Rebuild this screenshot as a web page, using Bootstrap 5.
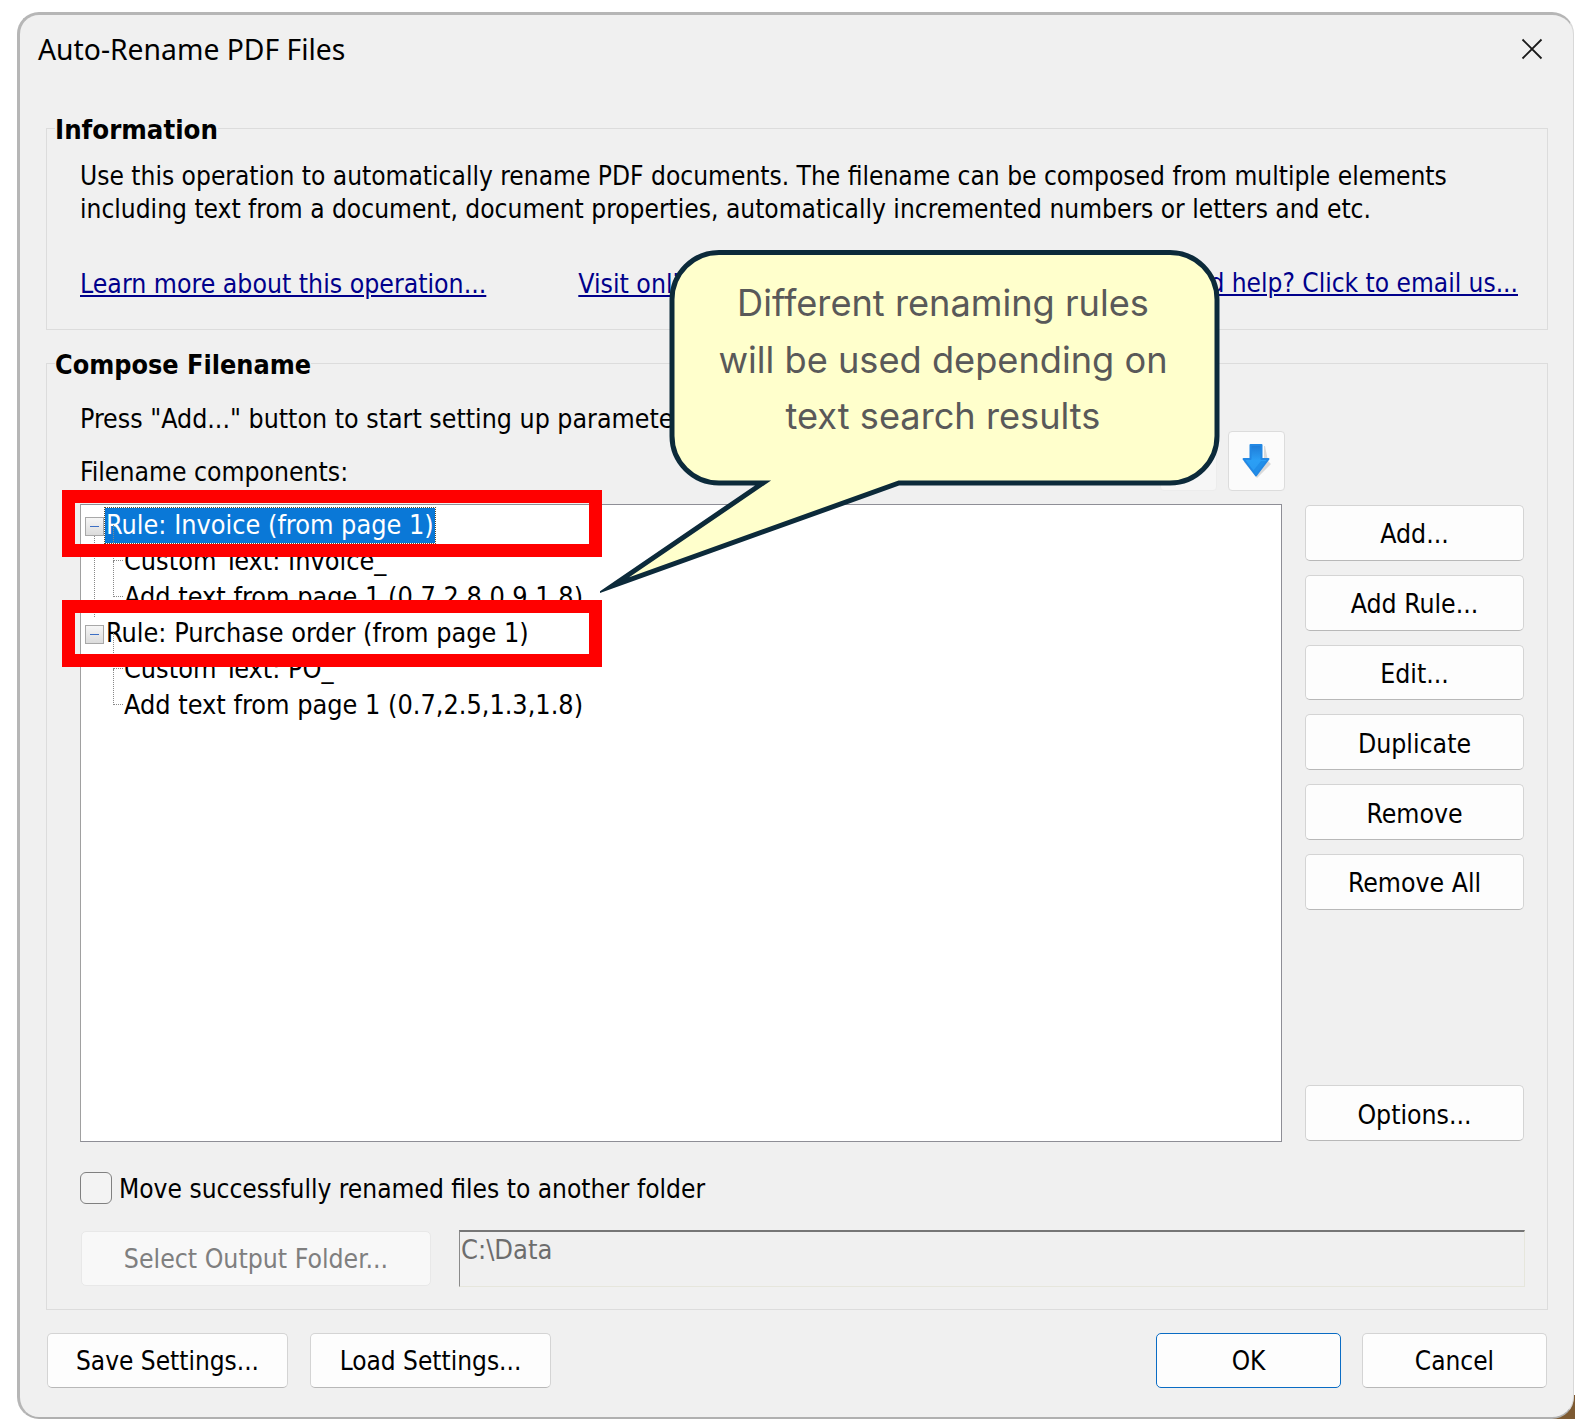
<!DOCTYPE html>
<html lang="en">
<head>
<meta charset="utf-8">
<title>Auto-Rename PDF Files</title>
<link href="https://cdn.jsdelivr.net/npm/bootstrap@5.3.0/dist/css/bootstrap.min.css" rel="stylesheet">
<style>
html,body{margin:0;padding:0;width:1575px;height:1419px;overflow:hidden;background:#fff}
body{position:relative;font-family:"DejaVu Sans","Noto Sans",sans-serif;font-stretch:condensed;font-size:26.1px;line-height:33px;color:#000}
.corner-bg{position:absolute;right:0;bottom:0;width:24px;height:24px;background:#7d5a32}
.dlg{position:absolute;left:17px;top:12px;width:1557px;height:1407px;background:#f0f0f0;border:3px solid #b6b6b6;border-right:1px solid #d8d8d8;border-bottom:2px solid #b0b0b0;border-radius:22px}
.dlg-title{height:68px;padding-left:18px;font-family:"Noto Sans",sans-serif;font-stretch:normal;font-size:28.3px;margin-bottom:26px}
.close-x{margin-right:30px;margin-top:-1px}
.grp{margin:0 25px 0 26px;border:1px solid #dcdcdc;padding:0 8px;min-width:0}
.grp legend{float:none;width:auto;font-weight:700;font-size:27.3px;line-height:34px;margin:0;padding:4px 0 0 0}
.grp.grp2 legend{font-size:26.75px}
.grp-body{margin-left:25px;margin-right:0}
.info-text{padding-top:13px}
.info-links{margin-top:41px;padding-bottom:29px;width:1438px;font-size:26.4px}
.info-links a{color:#00008b;text-decoration:underline;white-space:nowrap}
.info-links .mid{margin-left:92px}
.info-links .last-link{font-size:26.05px}
.grp2{margin-top:14px}
.press-row{margin-top:20px;font-size:26.5px;white-space:nowrap;overflow:hidden}
.lab2{margin-top:21px;padding-bottom:2px;font-size:26.3px}
.tb-btn{width:57px;height:60px;background:#fbfbfb;border:1px solid #dcdcdc;border-radius:4px;padding:0;flex:none}
.tb-btn.tb-off{background:#f6f6f6;border-color:#ececec}
.tb-row{gap:11px;width:1205px}
.main-row{margin-top:13px}
.tree{width:1202px;height:638px;background:#fff;border:1px solid #8e8e96;border-left-color:#a0a0a0;padding-top:2px;position:relative;font-size:26.8px}
.tnode{height:36px;line-height:36px;white-space:nowrap;position:relative}
.tnode.rule{padding-left:24px}
.tnode.rule span{display:inline-block;height:35px;line-height:34px;padding:0 1px}
.tnode.rule .sel{background:#0a78d7;color:#fff;outline:1px dotted #5a4a2a}
.tnode.leaf{padding-left:43px}
.tnode.leaf::before{content:"";position:absolute;left:32px;top:17px;width:10px;border-top:1px dotted #888}
.tnode.leaf::after{content:"";position:absolute;left:32px;top:-18px;height:36px;border-left:1px dotted #888}
.tbox{position:absolute;left:4px;top:10px;width:19px;height:19px;background:linear-gradient(#f6f6f6,#dcdcdc);border:1px solid #a8a8a8}
.tbox::after{content:"";position:absolute;left:4px;right:4px;top:8px;border-top:1px solid #3d6fc4}
.vline{position:absolute;left:13px;top:30px;height:82px;border-left:1px dotted #888}
.side{width:219px;margin-left:23px;padding-top:1px;gap:14px;height:637px}
.wbtn{background:#fdfdfd;border:1px solid #d4d4d4;border-bottom-color:#b8b8b8;border-radius:5px;height:55.8px;font-size:26.4px;line-height:33px;color:#000;padding:2px 0 0;text-align:center;font-stretch:condensed}
.wbtn:hover{background:#fdfdfd;color:#000;border-color:#d4d4d4}
.chk-row{margin-top:30px;height:31px;gap:7px}
.chk-lab{padding-top:3px}
.chk{width:32px;height:32px;border:1px solid #808080;border-radius:6px;background:#f3f3f3;flex:none}
.out-row{margin-top:28px;margin-left:1px;margin-bottom:22px}
.btn-off{width:350px;height:55px;background:#f8f8f8;border-color:#e8e8e8;color:#7f7f7f;padding-top:0}
.out-input{margin-left:28px;margin-top:-1px;width:1066px;height:57px;border-top:2px solid #767676;border-left:1px solid #8a8a8a;border-right:1px solid #e6e6dc;border-bottom:1px solid #e6e6dc;padding-left:1px;line-height:36px;color:#6d6d6d;font-size:27px}
.foot{margin:23px 26px 0 27px}
.foot .wbtn{width:185px;height:55px;font-size:26px;margin-left:21px}
.foot .wbtn.b-left{width:241px;margin-left:22px}
.foot .wbtn.b-first{margin-left:0}
.foot .wbtn.b-ok{border:1px solid #0a6cc4;border-radius:5px;margin-left:auto}
.red-frame{position:absolute;left:62px;width:540px;height:67px;border:13px solid #ff0000;pointer-events:none}
.callout{position:absolute;left:600px;top:248px;width:622px;height:350px}
.callout svg{position:absolute;left:0;top:0}
.callout-text{position:absolute;left:70px;width:546px;top:27px;text-align:center;font-family:Inter,"Noto Sans",sans-serif;font-stretch:normal;font-size:36.2px;line-height:56.7px;color:#595959}
</style>
</head>
<body>
<div class="corner-bg"></div>
<div class="dlg">
  <div class="dlg-title d-flex align-items-center justify-content-between">
    <span>Auto-Rename PDF Files</span>
    <svg class="close-x" width="22" height="22" viewBox="0 0 22 22"><path d="M1.500 1.500 20.500 20.500M20.500 1.500 1.500 20.500" stroke="#1a1a1a" stroke-width="1.800" fill="none"/></svg>
  </div>

  <fieldset class="grp">
    <legend>Information</legend>
    <div class="grp-body">
      <div class="info-text">Use this operation to automatically rename PDF documents. The filename can be composed from multiple elements<br>including text from a document, document properties, automatically incremented numbers or letters and etc.</div>
      <div class="info-links d-flex">
        <a href="#">Learn more about this operation...</a>
        <a href="#" class="mid">Visit online help</a>
        <a href="#" class="ms-auto last-link">Need help? Click to email us...</a>
      </div>
    </div>
  </fieldset>

  <fieldset class="grp grp2">
    <legend>Compose Filename</legend>
    <div class="grp-body">
      <div class="d-flex justify-content-between align-items-end tb-row">
        <div class="flex-grow-1">
          <div class="press-row">Press "Add..." button to start setting up parameters</div>
          <div class="lab2">Filename components:</div>
        </div>
        <button type="button" class="tb-btn tb-off d-flex align-items-center justify-content-center" aria-label="Move up"></button>
        <button type="button" class="tb-btn d-flex align-items-center justify-content-center" aria-label="Move down">
          <svg width="31" height="36" viewBox="0 0 31 36">
            <defs><linearGradient id="ag" x1="0" y1="0" x2="0" y2="1"><stop offset="0" stop-color="#1e7ad6"/><stop offset=".5" stop-color="#2b9ff5"/><stop offset="1" stop-color="#2a98f0"/></linearGradient></defs>
            <path d="M16 35 30 21 27 18 24 3H23V16H6L3 19Z" fill="#bdbdbd" opacity=".55"/>
            <path d="M9.500 2H20.500V16H27.500L15 32.500 2.500 16H9.500Z" fill="url(#ag)" stroke="#2288e4" stroke-width="2" stroke-linejoin="round"/>
            <path d="M20 18H25L15.500 30.500 12 28Z" fill="#1a84e0" opacity=".55"/>
          </svg>
        </button>
      </div>
      <div class="d-flex main-row">
        <div class="tree">
          <div class="vline"></div>
          <div class="tnode rule"><i class="tbox"></i><span class="sel">Rule: Invoice (from page 1)</span></div>
          <div class="tnode leaf">Custom Text: Invoice_</div>
          <div class="tnode leaf">Add text from page 1 (0.7,2.8,0.9,1.8)</div>
          <div class="tnode rule"><i class="tbox"></i><span>Rule: Purchase order (from page 1)</span></div>
          <div class="tnode leaf">Custom Text: PO_</div>
          <div class="tnode leaf">Add text from page 1 (0.7,2.5,1.3,1.8)</div>
        </div>
        <div class="side d-flex flex-column">
          <button type="button" class="btn wbtn">Add...</button>
          <button type="button" class="btn wbtn">Add Rule...</button>
          <button type="button" class="btn wbtn">Edit...</button>
          <button type="button" class="btn wbtn">Duplicate</button>
          <button type="button" class="btn wbtn">Remove</button>
          <button type="button" class="btn wbtn">Remove All</button>
          <button type="button" class="btn wbtn mt-auto">Options...</button>
        </div>
      </div>
      <div class="d-flex align-items-center chk-row">
        <span class="chk"></span><span class="chk-lab">Move successfully renamed files to another folder</span>
      </div>
      <div class="d-flex out-row">
        <button type="button" class="btn wbtn btn-off">Select Output Folder...</button>
        <div class="out-input">C:\Data</div>
      </div>
    </div>
  </fieldset>

  <div class="foot d-flex">
    <button type="button" class="btn wbtn b-left b-first">Save Settings...</button>
    <button type="button" class="btn wbtn b-left">Load Settings...</button>
    <button type="button" class="btn wbtn b-ok">OK</button>
    <button type="button" class="btn wbtn">Cancel</button>
  </div>
</div>

<div class="red-frame" style="top:490px"></div>
<div class="red-frame" style="top:600px"></div>

<div class="callout">
  <svg width="622" height="350" viewBox="0 0 622 350">
    <path d="M119 4.500H570a47 47 0 0 1 47 47V188a47 47 0 0 1-47 47H299L12 338 163 235H119a47 47 0 0 1-47-47V51.500a47 47 0 0 1 47-47Z" fill="#ffffcc" stroke="#0c2a3a" stroke-width="5" stroke-miterlimit="30" stroke-linejoin="miter"/>
  </svg>
  <div class="callout-text">Different renaming rules<br>will be used depending on<br>text search results</div>
</div>
</body>
</html>
